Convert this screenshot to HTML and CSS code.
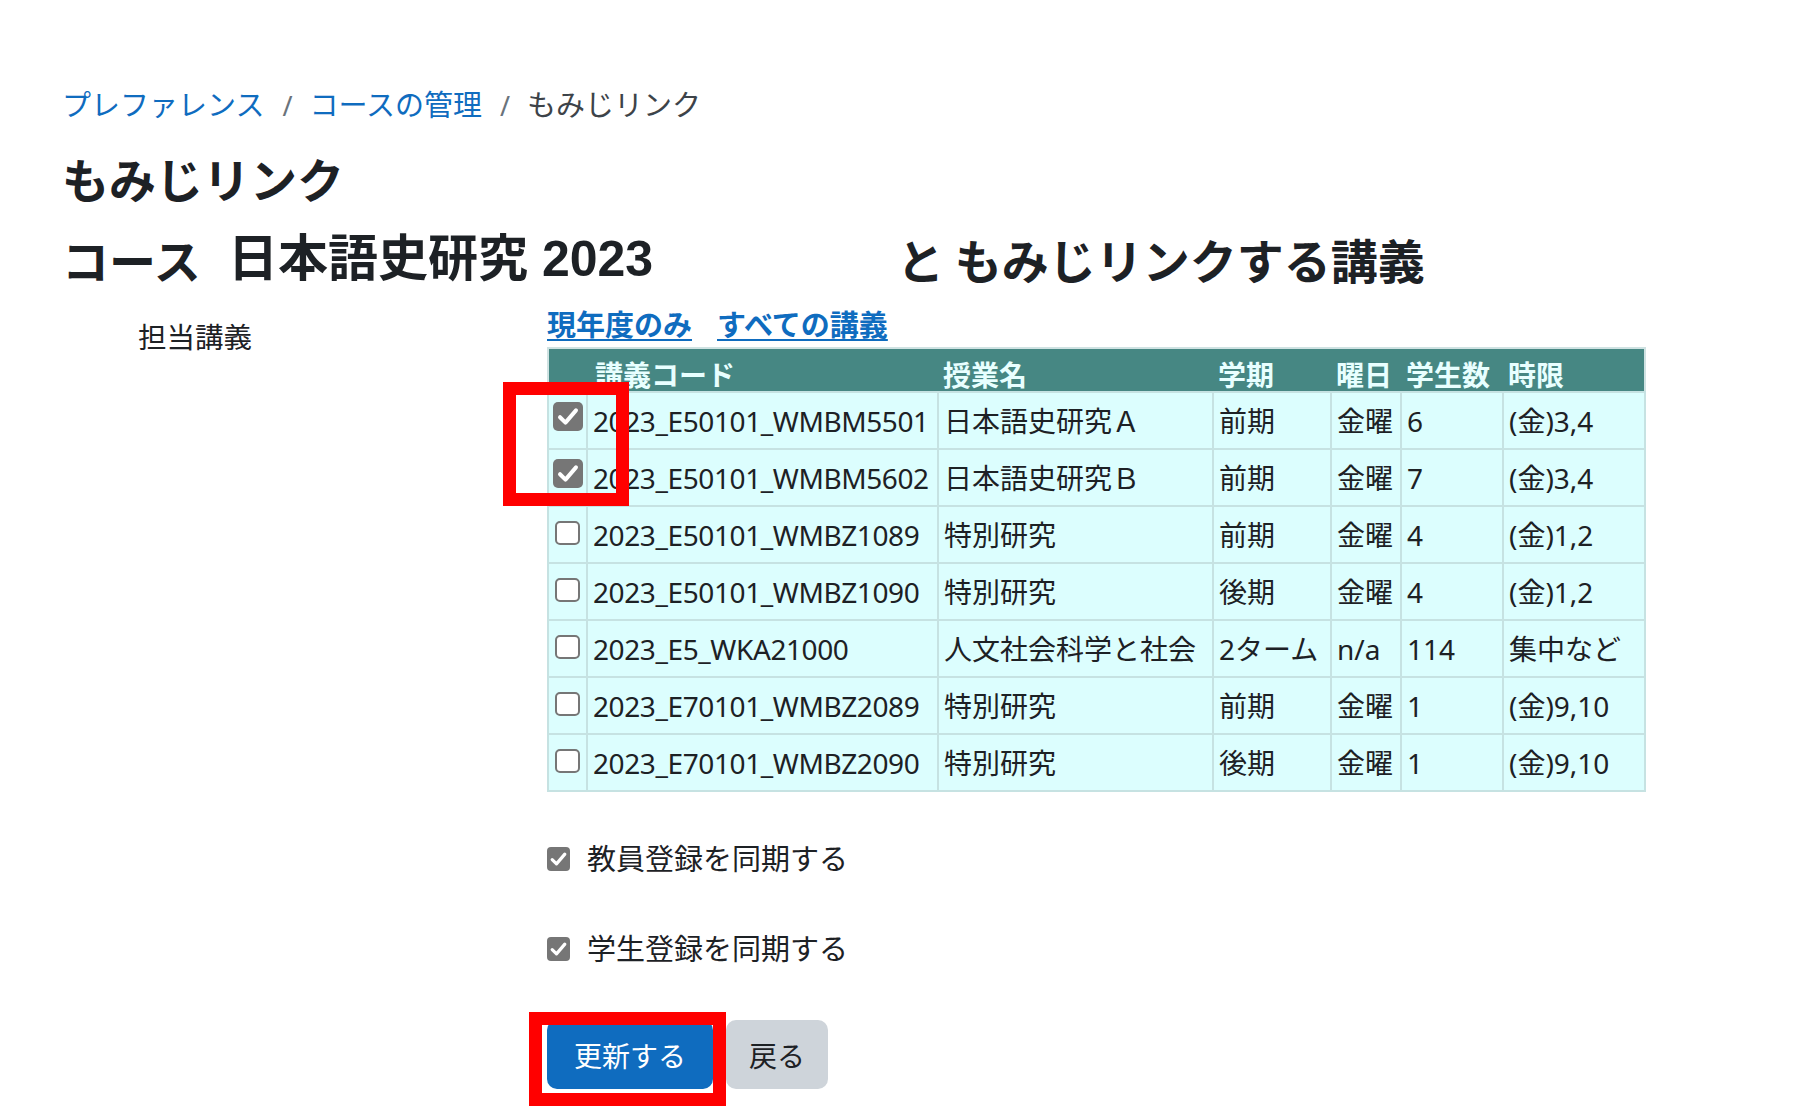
FILE: index.html
```html
<!DOCTYPE html>
<html lang="ja">
<head>
<meta charset="utf-8">
<title>もみじリンク</title>
<link rel="stylesheet" href="styles.css">
</head>
<body>
<div class="page">
  <nav class="breadcrumb">
    <a href="#">プレファレンス</a><span class="sep">/</span><a href="#">コースの管理</a><span class="sep">/</span><span class="current">もみじリンク</span>
  </nav>
  <h1 class="title">もみじリンク</h1>
  <h2 class="subtitle"><span class="lbl">コース</span><span class="course">日本語史研究 2023</span><span class="tail">と もみじリンクする講義</span></h2>

  <div class="form-row">
    <div class="form-label">担当講義</div>
    <div class="form-field">
      <div class="filters"><a href="#">現年度のみ</a><a href="#">すべての講義</a></div>
      <table class="courses">
        <colgroup>
          <col class="c1"><col class="c2"><col class="c3"><col class="c4"><col class="c5"><col class="c6"><col class="c7">
        </colgroup>
        <thead>
          <tr><th></th><th>講義コード</th><th>授業名</th><th>学期</th><th>曜日</th><th>学生数</th><th>時限</th></tr>
        </thead>
        <tbody>
          <tr><td class="cbcell"><span class="cb cb-on"><svg viewBox="0 0 16 16"><path d="M3.6 8.4 6.6 11.4 12.4 4.6"/></svg></span></td><td class="code">2023_E50101_WMBM5501</td><td>日本語史研究Ａ</td><td>前期</td><td>金曜</td><td>6</td><td>(金)3,4</td></tr>
          <tr><td class="cbcell"><span class="cb cb-on"><svg viewBox="0 0 16 16"><path d="M3.6 8.4 6.6 11.4 12.4 4.6"/></svg></span></td><td class="code">2023_E50101_WMBM5602</td><td>日本語史研究Ｂ</td><td>前期</td><td>金曜</td><td>7</td><td>(金)3,4</td></tr>
          <tr><td class="cbcell"><span class="cb cb-off"></span></td><td class="code">2023_E50101_WMBZ1089</td><td>特別研究</td><td>前期</td><td>金曜</td><td>4</td><td>(金)1,2</td></tr>
          <tr><td class="cbcell"><span class="cb cb-off"></span></td><td class="code">2023_E50101_WMBZ1090</td><td>特別研究</td><td>後期</td><td>金曜</td><td>4</td><td>(金)1,2</td></tr>
          <tr><td class="cbcell"><span class="cb cb-off"></span></td><td class="code">2023_E5_WKA21000</td><td>人文社会科学と社会</td><td>2ターム</td><td>n/a</td><td>114</td><td>集中など</td></tr>
          <tr><td class="cbcell"><span class="cb cb-off"></span></td><td class="code">2023_E70101_WMBZ2089</td><td>特別研究</td><td>前期</td><td>金曜</td><td>1</td><td>(金)9,10</td></tr>
          <tr><td class="cbcell"><span class="cb cb-off"></span></td><td class="code">2023_E70101_WMBZ2090</td><td>特別研究</td><td>後期</td><td>金曜</td><td>1</td><td>(金)9,10</td></tr>
        </tbody>
      </table>

      <label class="option"><span class="cb-small"><svg viewBox="0 0 16 16"><path d="M3.6 8.4 6.6 11.4 12.4 4.6"/></svg></span>教員登録を同期する</label>
      <label class="option option2"><span class="cb-small"><svg viewBox="0 0 16 16"><path d="M3.6 8.4 6.6 11.4 12.4 4.6"/></svg></span>学生登録を同期する</label>

      <div class="buttons">
        <button class="btn btn-primary" type="button">更新する</button>
        <button class="btn btn-secondary" type="button">戻る</button>
      </div>
    </div>
  </div>

  <div class="mark mark-checks"></div>
  <div class="mark mark-button"></div>
</div>
</body>
</html>
```

FILE: styles.css
```css
html, body {
  margin: 0;
  padding: 0;
  background: #ffffff;
}

body {
  font-family: "Noto Sans", "Noto Sans CJK JP", sans-serif;
  color: #1d2125;
  overflow: hidden;
}

.page {
  position: relative;
  padding: 88px 0 0 62px;
  height: 1018px;
}

a {
  color: #0f6cbf;
  text-decoration: none;
}

.breadcrumb {
  font-size: 29px;
  line-height: 34px;
  height: 34px;
  white-space: nowrap;
}

.breadcrumb .sep {
  color: #6a737b;
  padding: 0 17px 0 18px;
  font-size: 27px;
}

.breadcrumb .current {
  color: #3d4349;
}

.title {
  margin: 28px 0 0 0;
  font-size: 47px;
  line-height: 56px;
  font-weight: 700;
  font-family: "Noto Sans CJK JP", sans-serif;
}

.subtitle {
  margin: 25px 0 0 0;
  display: flex;
  align-items: center;
  height: 56px;
  font-size: 47px;
  line-height: 56px;
  font-weight: 700;
  font-family: "Noto Sans CJK JP", sans-serif;
  white-space: nowrap;
}

.subtitle .lbl {
  width: 166px;
}

.subtitle .course {
  width: 669px;
  font-family: "Liberation Sans", "Noto Sans CJK JP", sans-serif;
  font-size: 50px;
  font-weight: 700;
}

.form-row {
  margin-top: 21px;
  display: grid;
  grid-template-columns: 485px 1fr;
}

.form-label {
  padding: 12px 0 0 76px;
  font-size: 28.5px;
  line-height: 34px;
}

.filters {
  font-size: 29px;
  line-height: 34px;
  height: 34px;
  font-weight: 700;
  display: flex;
  gap: 25px;
  margin-bottom: 5px;
}

.filters a {
  text-decoration: underline;
  text-decoration-thickness: 2px;
  text-underline-offset: 3px;
}

.courses {
  border-collapse: collapse;
  table-layout: fixed;
  width: 1097px;
  font-size: 28px;
  border: 2px solid #cfe2e2;
}

.courses .c1 { width: 39px; }
.courses .c2 { width: 351px; }
.courses .c3 { width: 275px; }
.courses .c4 { width: 118px; }
.courses .c5 { width: 70px; }
.courses .c6 { width: 102px; }
.courses .c7 { width: 142px; }

.courses th {
  background: #468783;
  color: #e8ffff;
  font-weight: 700;
  text-align: left;
  vertical-align: bottom;
  height: 42px;
  padding: 0 5px 0 5px;
  line-height: 32px;
  white-space: nowrap;
  border: none;
}

.courses thead th:nth-child(2) {
  padding-left: 8px;
}

.courses td {
  background: #dcfefe;
  border: 2px solid #c6e2e2;
  height: 55px;
  padding: 0 5px;
  line-height: 34px;
  white-space: nowrap;
  vertical-align: middle;
}

.courses td.code {
  letter-spacing: -0.4px;
}

.courses td.cbcell {
  padding: 0 0 0 4px;
}

.cb {
  display: block;
  box-sizing: border-box;
  border-radius: 5px;
}

.cb-on {
  width: 30px;
  height: 29px;
  background: #767676;
  margin-bottom: 8px;
}

.cb-on svg,
.cb-small svg {
  display: block;
  width: 100%;
  height: 100%;
}

.cb-on path,
.cb-small path {
  fill: none;
  stroke: #ffffff;
  stroke-width: 2.2;
  stroke-linecap: round;
  stroke-linejoin: round;
}

.cb-off {
  width: 25px;
  height: 24px;
  background: #ffffff;
  border: 2px solid #767676;
  margin-left: 2px;
  margin-bottom: 4px;
}

.option {
  display: flex;
  align-items: center;
  height: 34px;
  margin-top: 50px;
  font-size: 29px;
  line-height: 34px;
  white-space: nowrap;
}

.option2 {
  margin-top: 56px;
}

.cb-small {
  display: block;
  width: 23px;
  height: 24px;
  background: #767676;
  border-radius: 4px;
  margin-right: 17px;
  flex: none;
}

.buttons {
  margin-top: 54px;
  display: flex;
  gap: 13px;
}

.btn {
  font-family: "Noto Sans", "Noto Sans CJK JP", sans-serif;
  font-size: 28px;
  height: 69px;
  border: none;
  border-radius: 10px;
  padding: 0 26px;
  cursor: pointer;
}

.btn-primary {
  background: #0f6cbf;
  color: #ffffff;
  width: 166px;
}

.btn-secondary {
  background: #ced4da;
  color: #1d2125;
  width: 102px;
  padding: 0 20px;
}

.mark {
  position: absolute;
  box-sizing: border-box;
  border: 13px solid #ff0000;
}

.mark-checks {
  left: 503px;
  top: 382px;
  width: 126px;
  height: 124px;
}

.mark-button {
  left: 529px;
  top: 1012px;
  width: 197px;
  height: 94px;
}
```
